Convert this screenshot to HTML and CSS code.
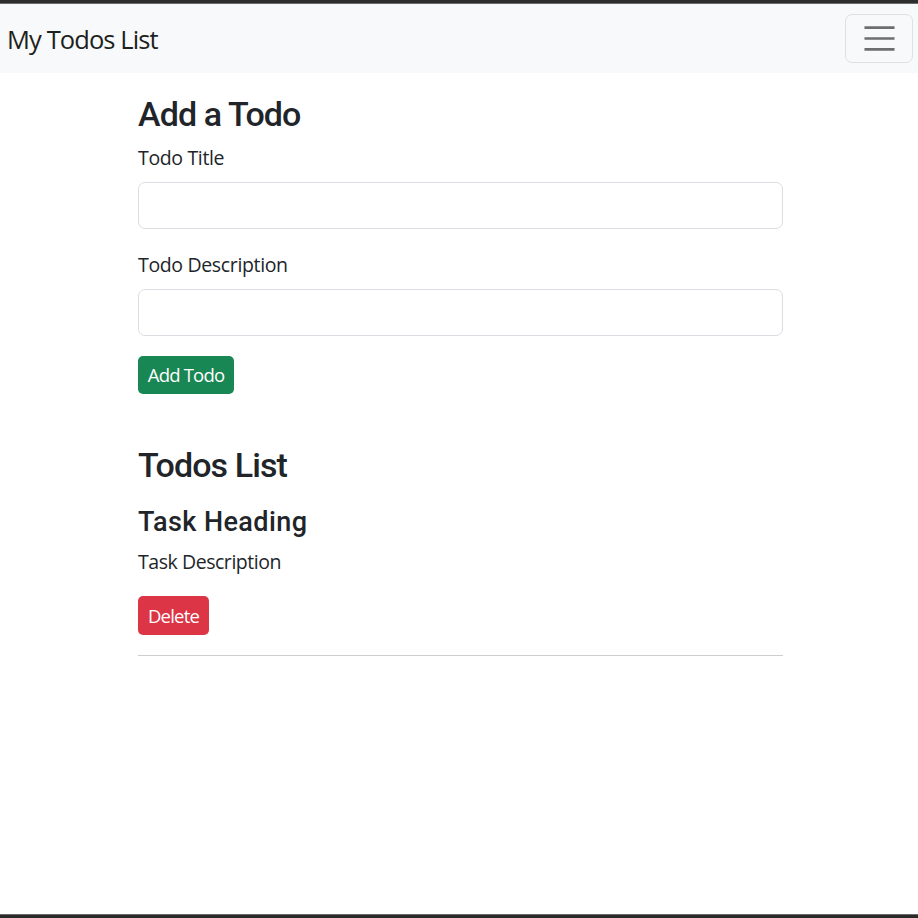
FILE: index.html
```html
<!DOCTYPE html>
<html lang="en">
<head>
<meta charset="utf-8">
<title>My Todos List</title>
<link rel="stylesheet" href="styles.css">
</head>
<body>
<div class="frame">
  <div class="edge edge-top"></div>
  <nav class="navbar">
    <a class="brand" href="#">My Todos List</a>
    <button class="toggler" type="button" aria-label="Toggle navigation">
      <svg class="toggler-icon" viewBox="0 0 30 30" width="41" height="41" aria-hidden="true">
        <path d="M4 7h22M4 15h22M4 23h22" stroke="#6c6e70" stroke-width="2" stroke-linecap="butt" fill="none"/>
      </svg>
    </button>
  </nav>
  <main class="container">
    <h2 class="h-section">Add a Todo</h2>
    <form class="todo-form">
      <label class="label label-first" for="title">Todo Title</label>
      <input class="input" type="text" id="title">
      <label class="label label-gap" for="desc">Todo Description</label>
      <input class="input" type="text" id="desc">
      <div class="actions">
        <button class="btn btn-green" type="button">Add Todo</button>
      </div>
    </form>
    <h2 class="h-section h-list">Todos List</h2>
    <div class="todo-item">
      <h4 class="task-title">Task Heading</h4>
      <p class="task-desc">Task Description</p>
      <div class="actions">
        <button class="btn btn-red" type="button">Delete</button>
      </div>
      <hr class="divider">
    </div>
  </main>
  <div class="edge edge-bottom"></div>
</div>
</body>
</html>
```
FILE: styles.css
```css
* { box-sizing: border-box; }
html, body { margin: 0; padding: 0; background: #ffffff; }
body {
  font-family: "Open Sans", "Noto Sans", "Liberation Sans", sans-serif;
  color: #212529;
}
.frame {
  height: 918px;
  display: flex;
  flex-direction: column;
  overflow: hidden;
}
.edge { flex: 0 0 4px; }
.edge-top { background: linear-gradient(#2e2e2e 0 3px, #6a6a6a 3px 4px); }
.edge-bottom { margin-top: auto; background: linear-gradient(#6a6a6a 0 1px, #2a2a2a 1px 4px); }

.navbar {
  height: 69px;
  background: #f8f9fa;
  display: flex;
  align-items: center;
  justify-content: space-between;
  padding: 0 5px 0 7px;
}
.brand {
  font-size: 25.5px;
  line-height: 32px;
  letter-spacing: -0.9px;
  color: #1d1f21;
  text-decoration: none;
  margin-top: 1px;
}
.toggler {
  width: 68px;
  height: 49px;
  padding: 0;
  background: transparent;
  border: 1px solid #dfe0e1;
  border-radius: 7px;
  display: flex;
  align-items: center;
  justify-content: center;
}
.toggler-icon { display: block; }

.container {
  width: 645px;
  margin: 0 135px 0 138px;
  padding-top: 20px;
}
.h-section {
  margin: 0;
  font-family: Roboto, "Open Sans", sans-serif;
  font-size: 34px;
  line-height: 43px;
  font-weight: 500;
  letter-spacing: -0.9px;
}
.todo-form { display: flex; flex-direction: column; }
.label {
  display: block;
  margin-top: 10px;
  font-size: 19.5px;
  line-height: 29px;
  letter-spacing: -0.35px;
}
.label-first { margin-top: 7px; }
.label-gap { margin-top: 21px; }
.input {
  display: block;
  width: 100%;
  height: 47px;
  margin-top: 10px;
  border: 1px solid #dadde1;
  border-radius: 7px;
  background: #fff;
  font: inherit;
}
.actions { display: flex; margin-top: 20px; }
.btn {
  height: 38px;
  border: 0;
  border-radius: 5px;
  color: #fff;
  font-family: inherit;
  font-size: 18.5px;
  line-height: 38px;
  letter-spacing: -0.8px;
  padding: 0;
}
.btn-green { background: #198754; width: 96px; }
.btn-red { background: #dc3545; width: 71px; height: 39px; }
.h-list { margin-top: 50px; }
.task-title {
  margin: 18px 0 0;
  font-family: Roboto, "Open Sans", sans-serif;
  font-size: 27px;
  line-height: 34.4px;
  font-weight: 500;
  letter-spacing: 0.4px;
}
.task-desc {
  margin: 7.6px 0 0;
  font-size: 19.5px;
  line-height: 29px;
  letter-spacing: -0.45px;
}
.divider {
  margin: 20px 0 0;
  border: 0;
  border-top: 1px solid #cdcecf;
}
```
